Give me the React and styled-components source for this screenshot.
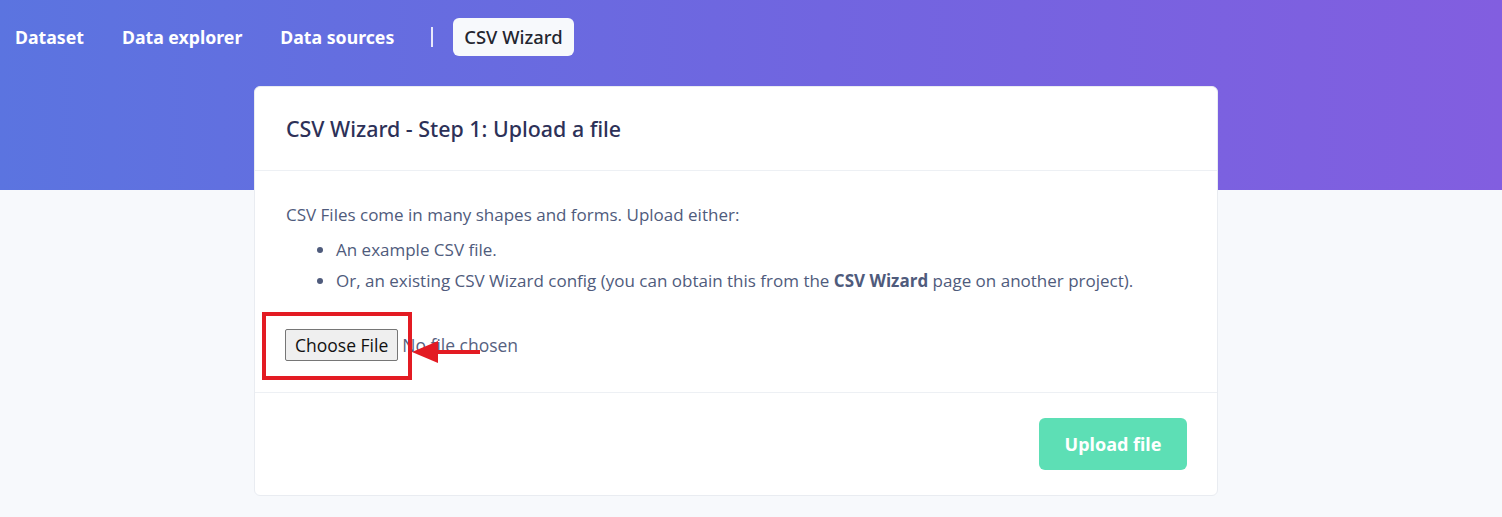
import React from 'react'
import styled, { createGlobalStyle } from 'styled-components'

const GlobalStyle = createGlobalStyle`
    html, body {
        margin: 0;
        padding: 0;
        background: #f7f9fc;
    }
    body {
        font-family: "Open Sans", "Noto Sans", sans-serif;
    }
`

const navItems = ['Dataset', 'Data explorer', 'Data sources']

const App = () => {
    return (
        <Page>
            <GlobalStyle/>
            <Nav>
                {navItems.map((item) => (
                    <NavItem key={item}>{item}</NavItem>
                ))}
                <Separator/>
                <NavItem active>CSV Wizard</NavItem>
            </Nav>
            <Card>
                <CardHeader>
                    <Title>CSV Wizard - Step 1: Upload a file</Title>
                </CardHeader>
                <CardBody>
                    <Intro>CSV Files come in many shapes and forms. Upload either:</Intro>
                    <List>
                        <li>An example CSV file.</li>
                        <li>Or, an existing CSV Wizard config (you can obtain this from the <b>CSV Wizard</b> page on another project).</li>
                    </List>
                    <FileRow>
                        <ChooseButton type="button">Choose File</ChooseButton>
                        <FileLabel>No file chosen</FileLabel>
                        <Highlight/>
                        <Arrow width="70" height="26" viewBox="0 0 70 26">
                            <line x1="24" y1="13" x2="68" y2="13" stroke="#e31b23" strokeWidth="4"/>
                            <polygon points="0,13 26,2 26,24" fill="#e31b23"/>
                        </Arrow>
                    </FileRow>
                </CardBody>
                <CardFooter>
                    <UploadButton type="button">Upload file</UploadButton>
                </CardFooter>
            </Card>
        </Page>
    )
}

const Page = styled.div`
    min-height: 517px;
    padding-top: 18px;
    box-sizing: border-box;
    background:
        linear-gradient(90deg, #5b74e0 0%, #7165e0 55%, #825ee0 100%) top left / 100% 190px no-repeat,
        #f7f9fc;
`

const Nav = styled.nav`
    display: flex;
    align-items: center;
    gap: 16px;
    padding-left: 4px;
    height: 38px;
`

const NavItem = styled.div`
    font-family: "Noto Sans", sans-serif;
    font-size: ${({active}) => active ? '18.4px' : '17.7px'};
    font-weight: ${({active}) => active ? 500 : 700};
    line-height: 38px;
    padding: 0 11px;
    border-radius: 6px;
    color: ${({active}) => active ? '#23252f' : '#ffffff'};
    background: ${({active}) => active ? '#f7f9fc' : 'transparent'};
`

const Separator = styled.span`
    width: 2px;
    height: 20px;
    margin: 0 4px 0 10px;
    background: rgba(255, 255, 255, 0.85);
`

const Card = styled.div`
    width: 964px;
    margin: 30px 0 0 254px;
    box-sizing: border-box;
    background: #ffffff;
    border: 1px solid #e9ecf1;
    border-radius: 6px;
`

const CardHeader = styled.div`
    height: 83px;
    display: flex;
    align-items: center;
    padding: 0 31px;
    border-bottom: 1px solid #edf0f4;
`

const Title = styled.h2`
    margin: 0;
    font-family: "Noto Sans", sans-serif;
    font-size: 21.4px;
    font-weight: 500;
    color: #2d3158;
`

const CardBody = styled.div`
    padding: 32px 31px 31px;
    color: #4f5b7c;
    font-size: 17px;
    line-height: 24px;
    border-bottom: 1px solid #edf0f4;
`

const Intro = styled.p`
    margin: 0 0 11px;
`

const List = styled.ul`
    margin: 0;
    padding-left: 50px;
    li {
        margin-bottom: 7px;
    }
    li:last-child {
        margin-bottom: 0;
    }
    b {
        font-weight: 700;
    }
`

const FileRow = styled.div`
    position: relative;
    display: flex;
    align-items: center;
    gap: 4px;
    margin-top: 36px;
    height: 32px;
`

const ChooseButton = styled.button`
    font-family: "Open Sans", "Noto Sans", sans-serif;
    font-size: 17.5px;
    height: 32px;
    padding: 0 9px;
    margin-left: -1px;
    color: #111;
    background: #efefef;
    border: 1px solid #767676;
    border-radius: 2px;
`

const FileLabel = styled.span`
    font-size: 17.5px;
    color: #56617f;
`

const Highlight = styled.div`
    position: absolute;
    left: -24px;
    top: -17px;
    width: 150px;
    height: 68px;
    box-sizing: border-box;
    border: 4px solid #e31b23;
`

const Arrow = styled.svg`
    position: absolute;
    left: 126px;
    top: 10px;
`

const CardFooter = styled.div`
    display: flex;
    justify-content: flex-end;
    padding: 25px 30px 25px;
`

const UploadButton = styled.button`
    width: 148px;
    height: 52px;
    border: none;
    border-radius: 6px;
    background: #5ddfb5;
    color: #ffffff;
    font-family: "Noto Sans", sans-serif;
    font-size: 18px;
    font-weight: 700;
`

export default App
